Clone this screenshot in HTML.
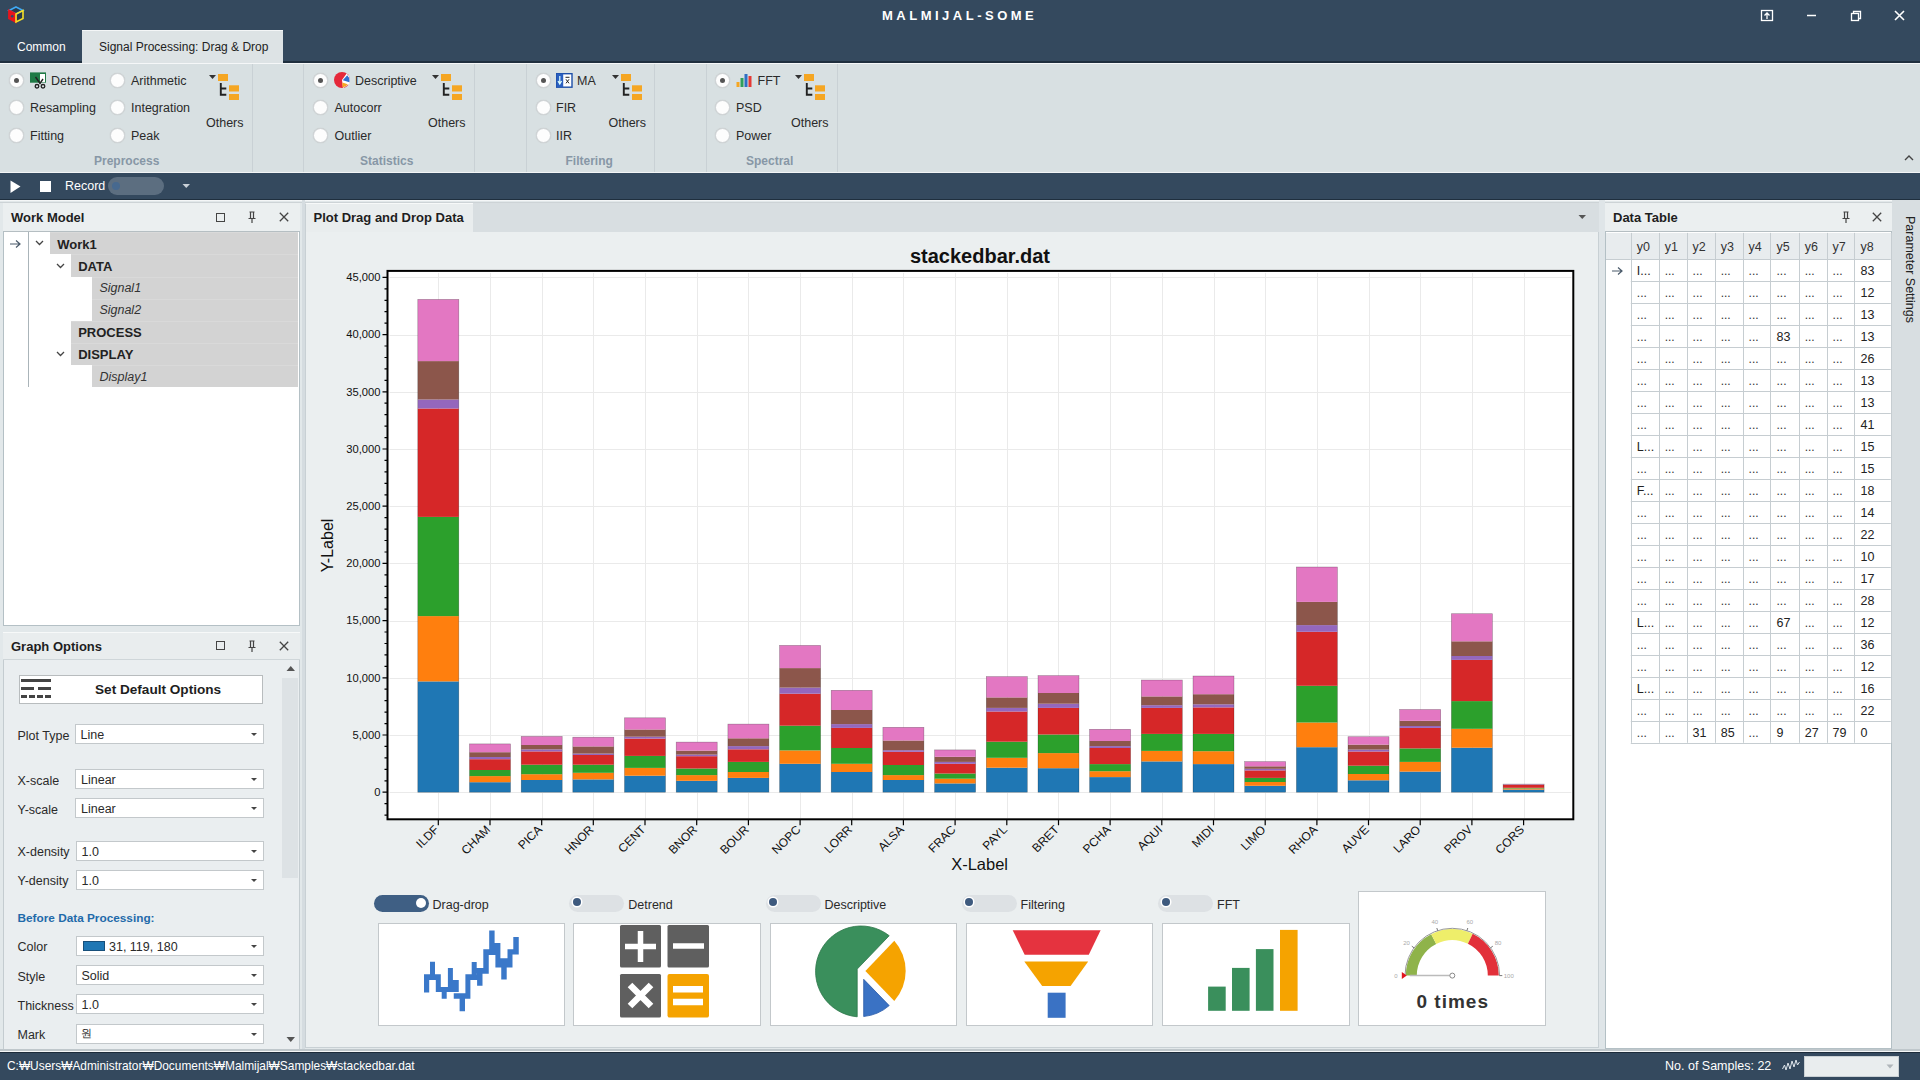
<!DOCTYPE html>
<html><head><meta charset="utf-8">
<style>
*{box-sizing:border-box;margin:0;padding:0}
html,body{width:1920px;height:1080px;overflow:hidden}
body{position:relative;background:#e4e9eb;font-family:"Liberation Sans",sans-serif;font-size:12px;color:#222}
.a{position:absolute}
.t{position:absolute;white-space:nowrap;line-height:1}

.rb{position:absolute;width:15px;height:15px;border-radius:50%;background:#fdfdfd;border:1px solid #cfd4d7;box-shadow:0 0 1px #bbb}
.rb.on::after{content:"";position:absolute;left:4px;top:4px;width:5px;height:5px;border-radius:50%;background:#555}
.rt{position:absolute;white-space:nowrap;line-height:1;font-size:12.5px;color:#2a2a2a}
.gl{position:absolute;white-space:nowrap;line-height:1;font-size:12px;font-weight:bold;color:#8797a6}
.sep{position:absolute;top:64px;width:1px;height:108px;background:#c9d1d5}
.cb{position:absolute;height:20px;background:#fff;border:1px solid #c3c8cb}
.cb::after{content:"";position:absolute;right:6px;top:8px;border-left:3.5px solid transparent;border-right:3.5px solid transparent;border-top:3.5px solid #444}
.lb{position:absolute;white-space:nowrap;line-height:1;font-size:12.5px;color:#2a2a2a}
.ph{position:absolute;white-space:nowrap;line-height:1;font-size:13px;font-weight:bold;color:#1e1e1e}

</style></head><body>
<div class="a" style="left:0;top:0;width:1920px;height:63px;background:#34495e"></div>
<div class="a" style="left:0;top:61px;width:1920px;height:2px;background:#1f2f3e"></div>
<div class="a" style="left:82px;top:30px;width:201px;height:34px;background:#dde3e5;border-top:1px solid #f4f6f7"></div>
<div class="t" style="left:17px;top:41px;font-size:12px;color:#fff">Common</div>
<div class="t" style="left:99px;top:41px;font-size:12px;color:#222">Signal Processing: Drag &amp; Drop</div>
<div class="t" style="left:882px;top:9px;font-size:13px;font-weight:bold;color:#fff;letter-spacing:3.5px">MALMIJAL-SOME</div>
<svg class="a" style="left:7px;top:6px" width="18" height="18" viewBox="0 0 18 18">
<path d="M9 1L16 4.5V12.5L9 16L2 12.5V4.5Z" fill="#2a3a4a"/>
<path d="M9 1L16 4.5L9 8L2 4.5Z" fill="none" stroke="#3fa9f5" stroke-width="1.6"/>
<path d="M2 4.5V12.5L9 16V8Z" fill="#e8141c" stroke="#e8141c" stroke-width="1.8"/><circle cx="5.2" cy="10.2" r="1.3" fill="#2a4a6a"/>
<path d="M16 4.5V12.5L9 16V8Z" fill="none" stroke="#f5e027" stroke-width="1.6"/>
</svg>
<svg class="a" style="left:1755px;top:5px" width="160" height="22" viewBox="0 0 160 22">
<rect x="6.5" y="5.5" width="11" height="10" fill="none" stroke="#fff" stroke-width="1.3"/>
<path d="M12 14V8M9.5 10.5L12 8L14.5 10.5" stroke="#fff" stroke-width="1.3" fill="none"/>
<path d="M52 10.5h9" stroke="#fff" stroke-width="1.5"/>
<rect x="96.5" y="8.5" width="7" height="7" fill="none" stroke="#fff" stroke-width="1.3"/>
<path d="M98.5 8.5V6.5h7v7h-2" fill="none" stroke="#fff" stroke-width="1.3"/>
<path d="M140 6L149 15M149 6L140 15" stroke="#fff" stroke-width="1.6"/>
</svg>
<div class="a" style="left:0;top:63px;width:1920px;height:110px;background:#d8e0e2;border-top:1px solid #f5f7f8"></div>
<div class="sep" style="left:252px"></div>
<div class="sep" style="left:303px"></div>
<div class="sep" style="left:474px"></div>
<div class="sep" style="left:526px"></div>
<div class="sep" style="left:654px"></div>
<div class="sep" style="left:706px"></div>
<div class="sep" style="left:837px"></div>
<div class="rb on" style="left:9.25px;top:72.5px"></div><div class="rb" style="left:9.25px;top:100.0px"></div><div class="rb" style="left:9.25px;top:127.5px"></div>
<div class="rb" style="left:110.0px;top:72.5px"></div><div class="rb" style="left:110.0px;top:100.0px"></div><div class="rb" style="left:110.0px;top:127.5px"></div>
<svg class="a" style="left:30px;top:72px" width="16" height="17" viewBox="0 0 16 17">
<rect x="0" y="0.4" width="16" height="10.3" fill="#1e7a45"/><rect x="10" y="2" width="5" height="8.2" fill="#fff"/>
<path d="M5.5 5L10.5 12M13 7L9.5 12" stroke="#222" stroke-width="1.4"/>
<circle cx="7" cy="14.3" r="1.8" fill="none" stroke="#222" stroke-width="1.3"/><circle cx="13" cy="14.3" r="1.8" fill="none" stroke="#222" stroke-width="1.3"/>
</svg>
<div class="rt" style="left:51px;top:75px">Detrend</div>
<div class="rt" style="left:30px;top:102px">Resampling</div>
<div class="rt" style="left:30px;top:129.5px">Fitting</div>
<div class="rt" style="left:131px;top:75px">Arithmetic</div>
<div class="rt" style="left:131px;top:102px">Integration</div>
<div class="rt" style="left:131px;top:129.5px">Peak</div>
<svg class="a" style="left:208px;top:74px" width="34" height="28" viewBox="0 0 34 28">
<path d="M1 1h7l-3.5 4z" fill="#333"/>
<rect x="10" y="0" width="10" height="7" fill="#f5a623"/>
<path d="M12.8 9v11.8h5.5M12.8 14.5h5.5" stroke="#222" stroke-width="1.9" fill="none"/>
<rect x="21" y="11.3" width="10" height="6.2" fill="#f5a623"/>
<rect x="21" y="20" width="10" height="6" fill="#f5a623"/>
</svg>
<div class="rt" style="left:206px;top:117px">Others</div>
<div class="gl" style="left:94px;top:155px">Preprocess</div>
<div class="rb on" style="left:313.25px;top:72.5px"></div><div class="rb" style="left:313.25px;top:100.0px"></div><div class="rb" style="left:313.25px;top:127.5px"></div>
<svg class="a" style="left:334px;top:72px" width="16" height="16" viewBox="0 0 16 16">
<circle cx="8" cy="8" r="8" fill="#e5283a"/><path d="M8 8L12.6 1.4A8 8 0 0 1 16 8.5L15.5 12L9 16Z" fill="#fff"/>
<path d="M8.8 8.2L13.2 3.2A7.2 7.2 0 0 1 15.3 10.2Z" fill="#2f6fd0"/><path d="M8.3 10.5L13.8 12.2A7.2 7.2 0 0 1 8.6 15.4Z" fill="#f5a623"/></svg>
<div class="rt" style="left:355px;top:75px">Descriptive</div>
<div class="rt" style="left:334.5px;top:102px">Autocorr</div>
<div class="rt" style="left:334.5px;top:129.5px">Outlier</div>
<svg class="a" style="left:431px;top:74px" width="34" height="28" viewBox="0 0 34 28">
<path d="M1 1h7l-3.5 4z" fill="#333"/>
<rect x="10" y="0" width="10" height="7" fill="#f5a623"/>
<path d="M12.8 9v11.8h5.5M12.8 14.5h5.5" stroke="#222" stroke-width="1.9" fill="none"/>
<rect x="21" y="11.3" width="10" height="6.2" fill="#f5a623"/>
<rect x="21" y="20" width="10" height="6" fill="#f5a623"/>
</svg>
<div class="rt" style="left:428px;top:117px">Others</div>
<div class="gl" style="left:360px;top:155px">Statistics</div>
<div class="rb on" style="left:535.5px;top:72.5px"></div><div class="rb" style="left:535.5px;top:100.0px"></div><div class="rb" style="left:535.5px;top:127.5px"></div>
<svg class="a" style="left:556px;top:72.5px" width="17" height="15" viewBox="0 0 17 15">
<rect x="0.7" y="0.7" width="15.3" height="13.5" fill="#fff" stroke="#1d4fa8" stroke-width="1.4"/><rect x="0.7" y="0.7" width="6.5" height="13.5" fill="#2a5fc0"/>
<path d="M3.8 3V10M2 8L3.8 11L5.6 8" stroke="#dff" stroke-width="1.2" fill="none"/>
<path d="M9.5 4.3h4M10 6.3L13 10.3M13 6.3L10 10.3" stroke="#222" stroke-width="1"/></svg>
<div class="rt" style="left:577px;top:75px">MA</div>
<div class="rt" style="left:556px;top:102px">FIR</div>
<div class="rt" style="left:556px;top:129.5px">IIR</div>
<svg class="a" style="left:611px;top:74px" width="34" height="28" viewBox="0 0 34 28">
<path d="M1 1h7l-3.5 4z" fill="#333"/>
<rect x="10" y="0" width="10" height="7" fill="#f5a623"/>
<path d="M12.8 9v11.8h5.5M12.8 14.5h5.5" stroke="#222" stroke-width="1.9" fill="none"/>
<rect x="21" y="11.3" width="10" height="6.2" fill="#f5a623"/>
<rect x="21" y="20" width="10" height="6" fill="#f5a623"/>
</svg>
<div class="rt" style="left:608.5px;top:117px">Others</div>
<div class="gl" style="left:565.5px;top:155px">Filtering</div>
<div class="rb on" style="left:715.0px;top:72.5px"></div><div class="rb" style="left:715.0px;top:100.0px"></div><div class="rb" style="left:715.0px;top:127.5px"></div>
<svg class="a" style="left:735.5px;top:72px" width="16" height="16" viewBox="0 0 16 16">
<rect x="0.5" y="10" width="3" height="5" fill="#f5a623"/><rect x="4.5" y="6" width="3" height="9" fill="#2e9e5b"/>
<rect x="8.5" y="2" width="3" height="13" fill="#2f6fc4"/><rect x="12.5" y="4" width="3" height="11" fill="#e53935"/></svg>
<div class="rt" style="left:757.5px;top:75px">FFT</div>
<div class="rt" style="left:736px;top:102px">PSD</div>
<div class="rt" style="left:736px;top:129.5px">Power</div>
<svg class="a" style="left:793.5px;top:74px" width="34" height="28" viewBox="0 0 34 28">
<path d="M1 1h7l-3.5 4z" fill="#333"/>
<rect x="10" y="0" width="10" height="7" fill="#f5a623"/>
<path d="M12.8 9v11.8h5.5M12.8 14.5h5.5" stroke="#222" stroke-width="1.9" fill="none"/>
<rect x="21" y="11.3" width="10" height="6.2" fill="#f5a623"/>
<rect x="21" y="20" width="10" height="6" fill="#f5a623"/>
</svg>
<div class="rt" style="left:791px;top:117px">Others</div>
<div class="gl" style="left:746px;top:155px">Spectral</div>
<svg class="a" style="left:1903px;top:154px" width="12" height="8"><path d="M2 6L6 2L10 6" stroke="#444" stroke-width="1.4" fill="none"/></svg>
<div class="a" style="left:0;top:172px;width:1920px;height:28px;background:#34495e;border-top:1px solid #f3f5f6"></div>
<div class="a" style="left:0;top:199px;width:1920px;height:1px;background:#1f2f3e"></div>
<svg class="a" style="left:10px;top:180px" width="12" height="14"><path d="M0.5 0.5L10.5 6.5L0.5 13Z" fill="#fff"/></svg>
<div class="a" style="left:40px;top:181px;width:10.5px;height:11px;background:#fff"></div>
<div class="t" style="left:65px;top:180px;font-size:12.5px;color:#fff">Record</div>
<div class="a" style="left:108px;top:177px;width:56px;height:18px;border-radius:9px;background:#5c6e80"></div>
<div class="a" style="left:111.5px;top:182px;width:8px;height:8px;border-radius:50%;background:#47698f"></div>
<svg class="a" style="left:182px;top:183px" width="9" height="6"><path d="M0.5 1H8L4.25 5Z" fill="#c9d1d8"/></svg>
<div class="a" style="left:0;top:200px;width:1920px;height:851px;background:#e2e8ea"></div>
<div class="a" style="left:0;top:200px;width:1920px;height:1px;background:#f4f6f7"></div>
<div class="a" style="left:0;top:201.5px;width:1920px;height:1px;background:#cdd3d6"></div>
<div class="a" style="left:3px;top:203px;width:297px;height:29px;background:#ebeff0;border-bottom:1.5px solid #f6f8f9"></div>
<div class="ph" style="left:11px;top:211px">Work Model</div>
<div class="a" style="left:215.5px;top:212.5px;width:9px;height:9px;border:1.2px solid #444"></div>
<svg class="a" style="left:247px;top:211px" width="10" height="13"><path d="M2.5 1H7.5M3.5 1V7M6.5 1V7M1.5 7.5H8.5M5 7.5V12" stroke="#444" stroke-width="1.2" fill="none"/></svg>
<svg class="a" style="left:279px;top:212px" width="10" height="10"><path d="M0.8 0.8L9.2 9.2M9.2 0.8L0.8 9.2" stroke="#444" stroke-width="1.3"/></svg>
<div class="a" style="left:3px;top:231px;width:297px;height:395px;background:#fff;border:1px solid #b4c0c5;border-top:1.5px solid #b5bec2"></div>
<div class="a" style="left:28px;top:232px;width:1px;height:155px;background:#aab4b9"></div>
<svg class="a" style="left:9px;top:239px" width="13" height="10"><path d="M1 5H11M7 1.5L11 5L7 8.5" stroke="#4a5a6a" stroke-width="1.2" fill="none"/></svg>
<div class="a" style="left:50px;top:232px;width:248px;height:22px;background:#d3d3d3;border-top:1px solid #d9d9d9"></div>
<div class="t" style="left:57.3px;top:237.9px;font-size:13px;font-weight:bold;color:#222">Work1</div>
<svg class="a" style="left:35px;top:240.4px" width="9" height="6"><path d="M1 1L4.5 4.5L8 1" stroke="#444" stroke-width="1.3" fill="none"/></svg>
<div class="a" style="left:71px;top:254px;width:227px;height:23px;background:#d3d3d3;border-top:1px solid #d9d9d9"></div>
<div class="t" style="left:78.2px;top:260.0px;font-size:13px;font-weight:bold;color:#222">DATA</div>
<svg class="a" style="left:56px;top:262.5px" width="9" height="6"><path d="M1 1L4.5 4.5L8 1" stroke="#444" stroke-width="1.3" fill="none"/></svg>
<div class="a" style="left:92px;top:277px;width:206px;height:22px;background:#d3d3d3;border-top:1px solid #d9d9d9"></div>
<div class="t" style="left:99.4px;top:282.1px;font-size:12.5px;font-style:italic;color:#333">Signal1</div>
<div class="a" style="left:92px;top:299px;width:206px;height:22px;background:#d3d3d3;border-top:1px solid #d9d9d9"></div>
<div class="t" style="left:99.4px;top:304.20000000000005px;font-size:12.5px;font-style:italic;color:#333">Signal2</div>
<div class="a" style="left:71px;top:321px;width:227px;height:22px;background:#d3d3d3;border-top:1px solid #d9d9d9"></div>
<div class="t" style="left:78.2px;top:326.30000000000007px;font-size:13px;font-weight:bold;color:#222">PROCESS</div>
<div class="a" style="left:71px;top:343px;width:227px;height:22px;background:#d3d3d3;border-top:1px solid #d9d9d9"></div>
<div class="t" style="left:78.2px;top:348.4000000000001px;font-size:13px;font-weight:bold;color:#222">DISPLAY</div>
<svg class="a" style="left:56px;top:350.9000000000001px" width="9" height="6"><path d="M1 1L4.5 4.5L8 1" stroke="#444" stroke-width="1.3" fill="none"/></svg>
<div class="a" style="left:92px;top:365px;width:206px;height:22px;background:#d3d3d3;border-top:1px solid #d9d9d9"></div>
<div class="t" style="left:99.4px;top:370.5000000000001px;font-size:12.5px;font-style:italic;color:#333">Display1</div>
<div class="a" style="left:3px;top:632px;width:297px;height:28px;background:#e9edee;border-top:1px solid #f7f9f9;border-bottom:1px solid #cfd6d9"></div>
<div class="ph" style="left:11px;top:640px">Graph Options</div>
<div class="a" style="left:215.5px;top:641.0px;width:9px;height:9px;border:1.2px solid #444"></div>
<svg class="a" style="left:247px;top:639.5px" width="10" height="13"><path d="M2.5 1H7.5M3.5 1V7M6.5 1V7M1.5 7.5H8.5M5 7.5V12" stroke="#444" stroke-width="1.2" fill="none"/></svg>
<svg class="a" style="left:279px;top:640.5px" width="10" height="10"><path d="M0.8 0.8L9.2 9.2M9.2 0.8L0.8 9.2" stroke="#444" stroke-width="1.3"/></svg>
<div class="a" style="left:3px;top:660px;width:297px;height:390px;background:#eaeef0;border:1px solid #c4ccd0;border-top:none"></div>
<div class="a" style="left:282px;top:678px;width:16px;height:200px;background:#dde2e5"></div>
<svg class="a" style="left:286px;top:665px" width="10" height="7"><path d="M0.5 6H9L4.75 1Z" fill="#555"/></svg>
<svg class="a" style="left:286px;top:1036px" width="10" height="7"><path d="M0.5 1H9L4.75 6Z" fill="#555"/></svg>
<div class="a" style="left:18.5px;top:675px;width:244px;height:28.5px;background:#fff;border:1px solid #b8bcbe"></div>
<svg class="a" style="left:21px;top:679px" width="31" height="21">
<rect x="0" y="0" width="30" height="3" fill="#444"/>
<rect x="0" y="8" width="13" height="3" fill="#444"/><rect x="17" y="8" width="13" height="3" fill="#444"/>
<rect x="0" y="16" width="6" height="3" fill="#444"/><rect x="8" y="16" width="6" height="3" fill="#444"/><rect x="16" y="16" width="6" height="3" fill="#444"/><rect x="24" y="16" width="6" height="3" fill="#444"/>
</svg>
<div class="ph" style="left:95px;top:682.5px;font-size:13.6px">Set Default Options</div>
<div class="lb" style="left:17.5px;top:729.8px">Plot Type</div>
<div class="cb" style="left:74.5px;top:724.3px;width:189.0px"></div>
<div class="lb" style="left:80.5px;top:729.3px">Line</div>
<div class="lb" style="left:17.5px;top:774.5px">X-scale</div>
<div class="cb" style="left:75px;top:769px;width:188.5px"></div>
<div class="lb" style="left:81px;top:774px">Linear</div>
<div class="lb" style="left:17.5px;top:803.9px">Y-scale</div>
<div class="cb" style="left:75px;top:798.4px;width:188.5px"></div>
<div class="lb" style="left:81px;top:803.4px">Linear</div>
<div class="lb" style="left:17.5px;top:846.2px">X-density</div>
<div class="cb" style="left:75.5px;top:840.7px;width:188.0px"></div>
<div class="lb" style="left:81.5px;top:845.7px">1.0</div>
<div class="lb" style="left:17.5px;top:875.1px">Y-density</div>
<div class="cb" style="left:75.5px;top:869.6px;width:188.0px"></div>
<div class="lb" style="left:81.5px;top:874.6px">1.0</div>
<div class="lb" style="left:17.5px;top:941.0px">Color</div>
<div class="cb" style="left:75.5px;top:935.5px;width:188.0px"></div>
<div class="a" style="left:83px;top:941.0px;width:21.5px;height:9.5px;background:#1f77b4;border:1px solid #174f7a"></div>
<div class="lb" style="left:109px;top:940.5px">31, 119, 180</div>
<div class="lb" style="left:17.5px;top:970.5px">Style</div>
<div class="cb" style="left:75.5px;top:965px;width:188.0px"></div>
<div class="lb" style="left:81.5px;top:970px">Solid</div>
<div class="lb" style="left:17.5px;top:999.9px">Thickness</div>
<div class="cb" style="left:75.5px;top:994.4px;width:188.0px"></div>
<div class="lb" style="left:81.5px;top:999.4px">1.0</div>
<div class="lb" style="left:17.5px;top:1029.3px">Mark</div>
<div class="cb" style="left:75.5px;top:1023.8px;width:188.0px"></div>
<div class="lb" style="left:81px;top:1027.8px;font-size:11px">&#50896;</div>
<div class="a" style="left:17.5px;top:912.5px;white-space:nowrap;line-height:1;font-size:11.8px;font-weight:bold;color:#1f6aaa">Before Data Processing:</div>
<div class="a" style="left:302px;top:200px;width:3px;height:851px;background:#d5dce0"></div>
<div class="a" style="left:305px;top:203px;width:1294px;height:845px;background:#ebeff0;border:1px solid #c8d0d4"></div>
<div class="a" style="left:305px;top:203px;width:1294px;height:29px;background:#d8dee1"></div>
<div class="a" style="left:305px;top:203px;width:168px;height:29px;background:#e9edee;border-top:1px solid #f7f9f9;border-left:1px solid #c8d0d4"></div>
<div class="ph" style="left:313.5px;top:211px">Plot Drag and Drop Data</div>
<svg class="a" style="left:1578px;top:214px" width="9" height="6"><path d="M0.5 1H8L4.25 5Z" fill="#555"/></svg>
<svg width="1920" height="1080" style="position:absolute;left:0;top:0">
<rect x="387.5" y="270.9" width="1185.8" height="548.4" fill="#fff"/>
<path d="M438.5 272.9V818.3 M490.5 272.9V818.3 M542.5 272.9V818.3 M593.5 272.9V818.3 M645.5 272.9V818.3 M697.5 272.9V818.3 M748.5 272.9V818.3 M800.5 272.9V818.3 M852.5 272.9V818.3 M903.5 272.9V818.3 M955.5 272.9V818.3 M1007.5 272.9V818.3 M1058.5 272.9V818.3 M1110.5 272.9V818.3 M1162.5 272.9V818.3 M1214.5 272.9V818.3 M1265.5 272.9V818.3 M1317.5 272.9V818.3 M1369.5 272.9V818.3 M1420.5 272.9V818.3 M1472.5 272.9V818.3 M1524.5 272.9V818.3 M389.5 792.5H1571.3 M389.5 735.5H1571.3 M389.5 678.5H1571.3 M389.5 621.5H1571.3 M389.5 563.5H1571.3 M389.5 506.5H1571.3 M389.5 449.5H1571.3 M389.5 392.5H1571.3 M389.5 335.5H1571.3 M389.5 277.5H1571.3" stroke="#eaeaea" stroke-width="1" fill="none"/>
<rect x="417.8" y="681.4" width="41" height="110.8" fill="#1f77b4"/>
<rect x="417.8" y="616.1" width="41" height="65.3" fill="#ff7f0e"/>
<rect x="417.8" y="516.9" width="41" height="99.2" fill="#2ca02c"/>
<rect x="417.8" y="408.5" width="41" height="108.4" fill="#d62728"/>
<rect x="417.8" y="399.5" width="41" height="9.0" fill="#9467bd"/>
<rect x="417.8" y="361.1" width="41" height="38.4" fill="#8c564b"/>
<rect x="417.8" y="299.4" width="41" height="61.7" fill="#e377c2"/>
<rect x="417.8" y="299.4" width="41" height="492.8" fill="none" stroke="#000" stroke-opacity="0.35" stroke-width="0.6"/>
<rect x="469.5" y="782.2" width="41" height="10.0" fill="#1f77b4"/>
<rect x="469.5" y="776.1" width="41" height="6.1" fill="#ff7f0e"/>
<rect x="469.5" y="770.0" width="41" height="6.1" fill="#2ca02c"/>
<rect x="469.5" y="759.2" width="41" height="10.8" fill="#d62728"/>
<rect x="469.5" y="757.0" width="41" height="2.2" fill="#9467bd"/>
<rect x="469.5" y="752.2" width="41" height="4.8" fill="#8c564b"/>
<rect x="469.5" y="743.9" width="41" height="8.3" fill="#e377c2"/>
<rect x="469.5" y="743.9" width="41" height="48.3" fill="none" stroke="#000" stroke-opacity="0.35" stroke-width="0.6"/>
<rect x="521.2" y="780.0" width="41" height="12.2" fill="#1f77b4"/>
<rect x="521.2" y="774.2" width="41" height="5.8" fill="#ff7f0e"/>
<rect x="521.2" y="764.7" width="41" height="9.5" fill="#2ca02c"/>
<rect x="521.2" y="751.4" width="41" height="13.3" fill="#d62728"/>
<rect x="521.2" y="749.4" width="41" height="2.0" fill="#9467bd"/>
<rect x="521.2" y="745.0" width="41" height="4.4" fill="#8c564b"/>
<rect x="521.2" y="736.4" width="41" height="8.6" fill="#e377c2"/>
<rect x="521.2" y="736.4" width="41" height="55.8" fill="none" stroke="#000" stroke-opacity="0.35" stroke-width="0.6"/>
<rect x="572.8" y="779.4" width="41" height="12.8" fill="#1f77b4"/>
<rect x="572.8" y="772.8" width="41" height="6.6" fill="#ff7f0e"/>
<rect x="572.8" y="764.7" width="41" height="8.1" fill="#2ca02c"/>
<rect x="572.8" y="755.0" width="41" height="9.7" fill="#d62728"/>
<rect x="572.8" y="753.6" width="41" height="1.4" fill="#9467bd"/>
<rect x="572.8" y="746.4" width="41" height="7.2" fill="#8c564b"/>
<rect x="572.8" y="737.2" width="41" height="9.2" fill="#e377c2"/>
<rect x="572.8" y="737.2" width="41" height="55.0" fill="none" stroke="#000" stroke-opacity="0.35" stroke-width="0.6"/>
<rect x="624.5" y="775.7" width="41" height="16.5" fill="#1f77b4"/>
<rect x="624.5" y="767.9" width="41" height="7.8" fill="#ff7f0e"/>
<rect x="624.5" y="755.9" width="41" height="12.0" fill="#2ca02c"/>
<rect x="624.5" y="738.6" width="41" height="17.3" fill="#d62728"/>
<rect x="624.5" y="736.7" width="41" height="1.9" fill="#9467bd"/>
<rect x="624.5" y="729.5" width="41" height="7.2" fill="#8c564b"/>
<rect x="624.5" y="717.8" width="41" height="11.7" fill="#e377c2"/>
<rect x="624.5" y="717.8" width="41" height="74.4" fill="none" stroke="#000" stroke-opacity="0.35" stroke-width="0.6"/>
<rect x="676.2" y="780.8" width="41" height="11.4" fill="#1f77b4"/>
<rect x="676.2" y="775.1" width="41" height="5.7" fill="#ff7f0e"/>
<rect x="676.2" y="768.5" width="41" height="6.6" fill="#2ca02c"/>
<rect x="676.2" y="756.2" width="41" height="12.3" fill="#d62728"/>
<rect x="676.2" y="754.6" width="41" height="1.6" fill="#9467bd"/>
<rect x="676.2" y="750.6" width="41" height="4.0" fill="#8c564b"/>
<rect x="676.2" y="742.1" width="41" height="8.5" fill="#e377c2"/>
<rect x="676.2" y="742.1" width="41" height="50.1" fill="none" stroke="#000" stroke-opacity="0.35" stroke-width="0.6"/>
<rect x="727.9" y="777.9" width="41" height="14.3" fill="#1f77b4"/>
<rect x="727.9" y="772.0" width="41" height="5.9" fill="#ff7f0e"/>
<rect x="727.9" y="761.9" width="41" height="10.1" fill="#2ca02c"/>
<rect x="727.9" y="749.3" width="41" height="12.6" fill="#d62728"/>
<rect x="727.9" y="746.1" width="41" height="3.2" fill="#9467bd"/>
<rect x="727.9" y="738.3" width="41" height="7.8" fill="#8c564b"/>
<rect x="727.9" y="724.1" width="41" height="14.2" fill="#e377c2"/>
<rect x="727.9" y="724.1" width="41" height="68.1" fill="none" stroke="#000" stroke-opacity="0.35" stroke-width="0.6"/>
<rect x="779.6" y="763.8" width="41" height="28.4" fill="#1f77b4"/>
<rect x="779.6" y="750.4" width="41" height="13.4" fill="#ff7f0e"/>
<rect x="779.6" y="725.7" width="41" height="24.7" fill="#2ca02c"/>
<rect x="779.6" y="693.7" width="41" height="32.0" fill="#d62728"/>
<rect x="779.6" y="687.6" width="41" height="6.1" fill="#9467bd"/>
<rect x="779.6" y="668.1" width="41" height="19.5" fill="#8c564b"/>
<rect x="779.6" y="645.4" width="41" height="22.7" fill="#e377c2"/>
<rect x="779.6" y="645.4" width="41" height="146.8" fill="none" stroke="#000" stroke-opacity="0.35" stroke-width="0.6"/>
<rect x="831.2" y="772.0" width="41" height="20.2" fill="#1f77b4"/>
<rect x="831.2" y="763.8" width="41" height="8.2" fill="#ff7f0e"/>
<rect x="831.2" y="748.0" width="41" height="15.8" fill="#2ca02c"/>
<rect x="831.2" y="727.9" width="41" height="20.1" fill="#d62728"/>
<rect x="831.2" y="724.1" width="41" height="3.8" fill="#9467bd"/>
<rect x="831.2" y="710.0" width="41" height="14.1" fill="#8c564b"/>
<rect x="831.2" y="690.3" width="41" height="19.7" fill="#e377c2"/>
<rect x="831.2" y="690.3" width="41" height="101.9" fill="none" stroke="#000" stroke-opacity="0.35" stroke-width="0.6"/>
<rect x="882.9" y="780.0" width="41" height="12.2" fill="#1f77b4"/>
<rect x="882.9" y="775.1" width="41" height="4.9" fill="#ff7f0e"/>
<rect x="882.9" y="765.0" width="41" height="10.1" fill="#2ca02c"/>
<rect x="882.9" y="751.8" width="41" height="13.2" fill="#d62728"/>
<rect x="882.9" y="750.2" width="41" height="1.6" fill="#9467bd"/>
<rect x="882.9" y="740.5" width="41" height="9.7" fill="#8c564b"/>
<rect x="882.9" y="727.3" width="41" height="13.2" fill="#e377c2"/>
<rect x="882.9" y="727.3" width="41" height="64.9" fill="none" stroke="#000" stroke-opacity="0.35" stroke-width="0.6"/>
<rect x="934.6" y="783.4" width="41" height="8.8" fill="#1f77b4"/>
<rect x="934.6" y="778.7" width="41" height="4.7" fill="#ff7f0e"/>
<rect x="934.6" y="773.5" width="41" height="5.2" fill="#2ca02c"/>
<rect x="934.6" y="763.8" width="41" height="9.7" fill="#d62728"/>
<rect x="934.6" y="761.9" width="41" height="1.9" fill="#9467bd"/>
<rect x="934.6" y="756.8" width="41" height="5.1" fill="#8c564b"/>
<rect x="934.6" y="749.9" width="41" height="6.9" fill="#e377c2"/>
<rect x="934.6" y="749.9" width="41" height="42.3" fill="none" stroke="#000" stroke-opacity="0.35" stroke-width="0.6"/>
<rect x="986.3" y="767.7" width="41" height="24.5" fill="#1f77b4"/>
<rect x="986.3" y="757.8" width="41" height="9.9" fill="#ff7f0e"/>
<rect x="986.3" y="741.7" width="41" height="16.1" fill="#2ca02c"/>
<rect x="986.3" y="711.5" width="41" height="30.2" fill="#d62728"/>
<rect x="986.3" y="707.9" width="41" height="3.6" fill="#9467bd"/>
<rect x="986.3" y="697.4" width="41" height="10.5" fill="#8c564b"/>
<rect x="986.3" y="676.6" width="41" height="20.8" fill="#e377c2"/>
<rect x="986.3" y="676.6" width="41" height="115.6" fill="none" stroke="#000" stroke-opacity="0.35" stroke-width="0.6"/>
<rect x="1038.0" y="768.2" width="41" height="24.0" fill="#1f77b4"/>
<rect x="1038.0" y="753.1" width="41" height="15.1" fill="#ff7f0e"/>
<rect x="1038.0" y="734.5" width="41" height="18.6" fill="#2ca02c"/>
<rect x="1038.0" y="707.9" width="41" height="26.6" fill="#d62728"/>
<rect x="1038.0" y="703.7" width="41" height="4.2" fill="#9467bd"/>
<rect x="1038.0" y="693.0" width="41" height="10.7" fill="#8c564b"/>
<rect x="1038.0" y="675.6" width="41" height="17.4" fill="#e377c2"/>
<rect x="1038.0" y="675.6" width="41" height="116.6" fill="none" stroke="#000" stroke-opacity="0.35" stroke-width="0.6"/>
<rect x="1089.6" y="777.1" width="41" height="15.1" fill="#1f77b4"/>
<rect x="1089.6" y="771.2" width="41" height="5.9" fill="#ff7f0e"/>
<rect x="1089.6" y="764.1" width="41" height="7.1" fill="#2ca02c"/>
<rect x="1089.6" y="748.0" width="41" height="16.1" fill="#d62728"/>
<rect x="1089.6" y="746.1" width="41" height="1.9" fill="#9467bd"/>
<rect x="1089.6" y="741.0" width="41" height="5.1" fill="#8c564b"/>
<rect x="1089.6" y="729.3" width="41" height="11.7" fill="#e377c2"/>
<rect x="1089.6" y="729.3" width="41" height="62.9" fill="none" stroke="#000" stroke-opacity="0.35" stroke-width="0.6"/>
<rect x="1141.3" y="761.4" width="41" height="30.8" fill="#1f77b4"/>
<rect x="1141.3" y="750.9" width="41" height="10.5" fill="#ff7f0e"/>
<rect x="1141.3" y="733.9" width="41" height="17.0" fill="#2ca02c"/>
<rect x="1141.3" y="707.9" width="41" height="26.0" fill="#d62728"/>
<rect x="1141.3" y="705.2" width="41" height="2.7" fill="#9467bd"/>
<rect x="1141.3" y="696.4" width="41" height="8.8" fill="#8c564b"/>
<rect x="1141.3" y="680.0" width="41" height="16.4" fill="#e377c2"/>
<rect x="1141.3" y="680.0" width="41" height="112.2" fill="none" stroke="#000" stroke-opacity="0.35" stroke-width="0.6"/>
<rect x="1193.0" y="764.1" width="41" height="28.1" fill="#1f77b4"/>
<rect x="1193.0" y="751.2" width="41" height="12.9" fill="#ff7f0e"/>
<rect x="1193.0" y="733.9" width="41" height="17.3" fill="#2ca02c"/>
<rect x="1193.0" y="707.4" width="41" height="26.5" fill="#d62728"/>
<rect x="1193.0" y="704.3" width="41" height="3.1" fill="#9467bd"/>
<rect x="1193.0" y="694.2" width="41" height="10.1" fill="#8c564b"/>
<rect x="1193.0" y="676.0" width="41" height="18.2" fill="#e377c2"/>
<rect x="1193.0" y="676.0" width="41" height="116.2" fill="none" stroke="#000" stroke-opacity="0.35" stroke-width="0.6"/>
<rect x="1244.7" y="785.8" width="41" height="6.4" fill="#1f77b4"/>
<rect x="1244.7" y="782.0" width="41" height="3.8" fill="#ff7f0e"/>
<rect x="1244.7" y="777.9" width="41" height="4.1" fill="#2ca02c"/>
<rect x="1244.7" y="770.4" width="41" height="7.5" fill="#d62728"/>
<rect x="1244.7" y="768.8" width="41" height="1.6" fill="#9467bd"/>
<rect x="1244.7" y="766.3" width="41" height="2.5" fill="#8c564b"/>
<rect x="1244.7" y="761.6" width="41" height="4.7" fill="#e377c2"/>
<rect x="1244.7" y="761.6" width="41" height="30.6" fill="none" stroke="#000" stroke-opacity="0.35" stroke-width="0.6"/>
<rect x="1296.4" y="747.2" width="41" height="45.0" fill="#1f77b4"/>
<rect x="1296.4" y="722.5" width="41" height="24.7" fill="#ff7f0e"/>
<rect x="1296.4" y="685.8" width="41" height="36.7" fill="#2ca02c"/>
<rect x="1296.4" y="631.8" width="41" height="54.0" fill="#d62728"/>
<rect x="1296.4" y="625.1" width="41" height="6.7" fill="#9467bd"/>
<rect x="1296.4" y="601.9" width="41" height="23.2" fill="#8c564b"/>
<rect x="1296.4" y="567.0" width="41" height="34.9" fill="#e377c2"/>
<rect x="1296.4" y="567.0" width="41" height="225.2" fill="none" stroke="#000" stroke-opacity="0.35" stroke-width="0.6"/>
<rect x="1348.0" y="780.3" width="41" height="11.9" fill="#1f77b4"/>
<rect x="1348.0" y="774.0" width="41" height="6.3" fill="#ff7f0e"/>
<rect x="1348.0" y="765.7" width="41" height="8.3" fill="#2ca02c"/>
<rect x="1348.0" y="751.5" width="41" height="14.2" fill="#d62728"/>
<rect x="1348.0" y="749.6" width="41" height="1.9" fill="#9467bd"/>
<rect x="1348.0" y="744.6" width="41" height="5.0" fill="#8c564b"/>
<rect x="1348.0" y="736.7" width="41" height="7.9" fill="#e377c2"/>
<rect x="1348.0" y="736.7" width="41" height="55.5" fill="none" stroke="#000" stroke-opacity="0.35" stroke-width="0.6"/>
<rect x="1399.7" y="771.6" width="41" height="20.6" fill="#1f77b4"/>
<rect x="1399.7" y="761.9" width="41" height="9.7" fill="#ff7f0e"/>
<rect x="1399.7" y="748.4" width="41" height="13.5" fill="#2ca02c"/>
<rect x="1399.7" y="727.9" width="41" height="20.5" fill="#d62728"/>
<rect x="1399.7" y="726.0" width="41" height="1.9" fill="#9467bd"/>
<rect x="1399.7" y="720.8" width="41" height="5.2" fill="#8c564b"/>
<rect x="1399.7" y="709.5" width="41" height="11.3" fill="#e377c2"/>
<rect x="1399.7" y="709.5" width="41" height="82.7" fill="none" stroke="#000" stroke-opacity="0.35" stroke-width="0.6"/>
<rect x="1451.4" y="747.7" width="41" height="44.5" fill="#1f77b4"/>
<rect x="1451.4" y="728.8" width="41" height="18.9" fill="#ff7f0e"/>
<rect x="1451.4" y="701.1" width="41" height="27.7" fill="#2ca02c"/>
<rect x="1451.4" y="659.9" width="41" height="41.2" fill="#d62728"/>
<rect x="1451.4" y="656.0" width="41" height="3.9" fill="#9467bd"/>
<rect x="1451.4" y="641.3" width="41" height="14.7" fill="#8c564b"/>
<rect x="1451.4" y="613.7" width="41" height="27.6" fill="#e377c2"/>
<rect x="1451.4" y="613.7" width="41" height="178.5" fill="none" stroke="#000" stroke-opacity="0.35" stroke-width="0.6"/>
<rect x="1503.1" y="789.6" width="41" height="2.6" fill="#1f77b4"/>
<rect x="1503.1" y="788.5" width="41" height="1.1" fill="#ff7f0e"/>
<rect x="1503.1" y="787.8" width="41" height="0.7" fill="#2ca02c"/>
<rect x="1503.1" y="785.0" width="41" height="2.8" fill="#d62728"/>
<rect x="1503.1" y="784.8" width="41" height="0.2" fill="#9467bd"/>
<rect x="1503.1" y="784.5" width="41" height="0.3" fill="#8c564b"/>
<rect x="1503.1" y="784.1" width="41" height="0.4" fill="#e377c2"/>
<rect x="1503.1" y="784.1" width="41" height="8.1" fill="none" stroke="#000" stroke-opacity="0.35" stroke-width="0.6"/>
<rect x="387.5" y="270.9" width="1185.8" height="548.4" fill="none" stroke="#000" stroke-width="2"/>
<path d="M384.5 815.1H387.5 M384.5 803.6H387.5 M382.5 792.2H387.5 M384.5 780.8H387.5 M384.5 769.3H387.5 M384.5 757.9H387.5 M384.5 746.4H387.5 M382.5 735.0H387.5 M384.5 723.6H387.5 M384.5 712.1H387.5 M384.5 700.7H387.5 M384.5 689.2H387.5 M382.5 677.8H387.5 M384.5 666.4H387.5 M384.5 654.9H387.5 M384.5 643.5H387.5 M384.5 632.0H387.5 M382.5 620.6H387.5 M384.5 609.2H387.5 M384.5 597.7H387.5 M384.5 586.3H387.5 M384.5 574.8H387.5 M382.5 563.4H387.5 M384.5 552.0H387.5 M384.5 540.5H387.5 M384.5 529.1H387.5 M384.5 517.6H387.5 M382.5 506.2H387.5 M384.5 494.8H387.5 M384.5 483.3H387.5 M384.5 471.9H387.5 M384.5 460.4H387.5 M382.5 449.0H387.5 M384.5 437.6H387.5 M384.5 426.1H387.5 M384.5 414.7H387.5 M384.5 403.2H387.5 M382.5 391.8H387.5 M384.5 380.4H387.5 M384.5 368.9H387.5 M384.5 357.5H387.5 M384.5 346.0H387.5 M382.5 334.6H387.5 M384.5 323.2H387.5 M384.5 311.7H387.5 M384.5 300.3H387.5 M384.5 288.8H387.5 M382.5 277.4H387.5 M438.3 819.3V825.3 M490.0 819.3V825.3 M541.7 819.3V825.3 M593.3 819.3V825.3 M645.0 819.3V825.3 M696.7 819.3V825.3 M748.4 819.3V825.3 M800.1 819.3V825.3 M851.7 819.3V825.3 M903.4 819.3V825.3 M955.1 819.3V825.3 M1006.8 819.3V825.3 M1058.5 819.3V825.3 M1110.1 819.3V825.3 M1161.8 819.3V825.3 M1213.5 819.3V825.3 M1265.2 819.3V825.3 M1316.9 819.3V825.3 M1368.5 819.3V825.3 M1420.2 819.3V825.3 M1471.9 819.3V825.3 M1523.6 819.3V825.3" stroke="#000" stroke-width="1.2" fill="none"/>
<text x="380.5" y="796.0" text-anchor="end" font-family="Liberation Sans" font-size="11.2" fill="#111">0</text>
<text x="380.5" y="738.8" text-anchor="end" font-family="Liberation Sans" font-size="11.2" fill="#111">5,000</text>
<text x="380.5" y="681.6" text-anchor="end" font-family="Liberation Sans" font-size="11.2" fill="#111">10,000</text>
<text x="380.5" y="624.4" text-anchor="end" font-family="Liberation Sans" font-size="11.2" fill="#111">15,000</text>
<text x="380.5" y="567.2" text-anchor="end" font-family="Liberation Sans" font-size="11.2" fill="#111">20,000</text>
<text x="380.5" y="510.0" text-anchor="end" font-family="Liberation Sans" font-size="11.2" fill="#111">25,000</text>
<text x="380.5" y="452.8" text-anchor="end" font-family="Liberation Sans" font-size="11.2" fill="#111">30,000</text>
<text x="380.5" y="395.6" text-anchor="end" font-family="Liberation Sans" font-size="11.2" fill="#111">35,000</text>
<text x="380.5" y="338.4" text-anchor="end" font-family="Liberation Sans" font-size="11.2" fill="#111">40,000</text>
<text x="380.5" y="281.2" text-anchor="end" font-family="Liberation Sans" font-size="11.2" fill="#111">45,000</text>
<text transform="translate(439.5,830.3) rotate(-45)" text-anchor="end" font-family="Liberation Sans" font-size="12" fill="#111">ILDF</text>
<text transform="translate(491.2,830.3) rotate(-45)" text-anchor="end" font-family="Liberation Sans" font-size="12" fill="#111">CHAM</text>
<text transform="translate(542.9,830.3) rotate(-45)" text-anchor="end" font-family="Liberation Sans" font-size="12" fill="#111">PICA</text>
<text transform="translate(594.5,830.3) rotate(-45)" text-anchor="end" font-family="Liberation Sans" font-size="12" fill="#111">HNOR</text>
<text transform="translate(646.2,830.3) rotate(-45)" text-anchor="end" font-family="Liberation Sans" font-size="12" fill="#111">CENT</text>
<text transform="translate(697.9,830.3) rotate(-45)" text-anchor="end" font-family="Liberation Sans" font-size="12" fill="#111">BNOR</text>
<text transform="translate(749.6,830.3) rotate(-45)" text-anchor="end" font-family="Liberation Sans" font-size="12" fill="#111">BOUR</text>
<text transform="translate(801.3,830.3) rotate(-45)" text-anchor="end" font-family="Liberation Sans" font-size="12" fill="#111">NOPC</text>
<text transform="translate(852.9,830.3) rotate(-45)" text-anchor="end" font-family="Liberation Sans" font-size="12" fill="#111">LORR</text>
<text transform="translate(904.6,830.3) rotate(-45)" text-anchor="end" font-family="Liberation Sans" font-size="12" fill="#111">ALSA</text>
<text transform="translate(956.3,830.3) rotate(-45)" text-anchor="end" font-family="Liberation Sans" font-size="12" fill="#111">FRAC</text>
<text transform="translate(1008.0,830.3) rotate(-45)" text-anchor="end" font-family="Liberation Sans" font-size="12" fill="#111">PAYL</text>
<text transform="translate(1059.7,830.3) rotate(-45)" text-anchor="end" font-family="Liberation Sans" font-size="12" fill="#111">BRET</text>
<text transform="translate(1111.3,830.3) rotate(-45)" text-anchor="end" font-family="Liberation Sans" font-size="12" fill="#111">PCHA</text>
<text transform="translate(1163.0,830.3) rotate(-45)" text-anchor="end" font-family="Liberation Sans" font-size="12" fill="#111">AQUI</text>
<text transform="translate(1214.7,830.3) rotate(-45)" text-anchor="end" font-family="Liberation Sans" font-size="12" fill="#111">MIDI</text>
<text transform="translate(1266.4,830.3) rotate(-45)" text-anchor="end" font-family="Liberation Sans" font-size="12" fill="#111">LIMO</text>
<text transform="translate(1318.1,830.3) rotate(-45)" text-anchor="end" font-family="Liberation Sans" font-size="12" fill="#111">RHOA</text>
<text transform="translate(1369.7,830.3) rotate(-45)" text-anchor="end" font-family="Liberation Sans" font-size="12" fill="#111">AUVE</text>
<text transform="translate(1421.4,830.3) rotate(-45)" text-anchor="end" font-family="Liberation Sans" font-size="12" fill="#111">LARO</text>
<text transform="translate(1473.1,830.3) rotate(-45)" text-anchor="end" font-family="Liberation Sans" font-size="12" fill="#111">PROV</text>
<text transform="translate(1524.8,830.3) rotate(-45)" text-anchor="end" font-family="Liberation Sans" font-size="12" fill="#111">CORS</text>
<text x="979.6" y="870.3" text-anchor="middle" font-family="Liberation Sans" font-size="16.5" fill="#111">X-Label</text>
<text transform="translate(333.3,545.5) rotate(-90)" text-anchor="middle" font-family="Liberation Sans" font-size="16" fill="#111">Y-Label</text>
<text x="980" y="263.3" text-anchor="middle" font-family="Liberation Sans" font-weight="bold" font-size="20" fill="#111">stackedbar.dat</text>
</svg>
<div class="a" style="left:373.5px;top:895px;width:55px;height:17px;border-radius:8.5px;background:#3f5f84"></div>
<div class="a" style="left:415.5px;top:898px;width:10px;height:10px;border-radius:50%;background:#fff"></div>
<div class="t" style="left:432.5px;top:898.5px;font-size:12.5px;color:#2a2a2a">Drag-drop</div>
<div class="a" style="left:377.5px;top:923px;width:187.5px;height:102.5px;background:#fff;border:1px solid #c3c8cb"></div>
<div class="a" style="left:569.3px;top:895px;width:55px;height:17px;border-radius:8.5px;background:#dde1e4"></div>
<div class="a" style="left:572.8px;top:898px;width:8px;height:8px;border-radius:50%;background:#3e5a7e;box-shadow:0 0 0 1.5px #fff"></div>
<div class="t" style="left:628.3px;top:898.5px;font-size:12.5px;color:#2a2a2a">Detrend</div>
<div class="a" style="left:573.3px;top:923px;width:187.5px;height:102.5px;background:#fff;border:1px solid #c3c8cb"></div>
<div class="a" style="left:765.5px;top:895px;width:55px;height:17px;border-radius:8.5px;background:#dde1e4"></div>
<div class="a" style="left:769.0px;top:898px;width:8px;height:8px;border-radius:50%;background:#3e5a7e;box-shadow:0 0 0 1.5px #fff"></div>
<div class="t" style="left:824.5px;top:898.5px;font-size:12.5px;color:#2a2a2a">Descriptive</div>
<div class="a" style="left:769.5px;top:923px;width:187.5px;height:102.5px;background:#fff;border:1px solid #c3c8cb"></div>
<div class="a" style="left:961.5px;top:895px;width:55px;height:17px;border-radius:8.5px;background:#dde1e4"></div>
<div class="a" style="left:965.0px;top:898px;width:8px;height:8px;border-radius:50%;background:#3e5a7e;box-shadow:0 0 0 1.5px #fff"></div>
<div class="t" style="left:1020.5px;top:898.5px;font-size:12.5px;color:#2a2a2a">Filtering</div>
<div class="a" style="left:965.5px;top:923px;width:187.5px;height:102.5px;background:#fff;border:1px solid #c3c8cb"></div>
<div class="a" style="left:1158px;top:895px;width:55px;height:17px;border-radius:8.5px;background:#dde1e4"></div>
<div class="a" style="left:1161.5px;top:898px;width:8px;height:8px;border-radius:50%;background:#3e5a7e;box-shadow:0 0 0 1.5px #fff"></div>
<div class="t" style="left:1217px;top:898.5px;font-size:12.5px;color:#2a2a2a">FFT</div>
<div class="a" style="left:1162px;top:923px;width:187.5px;height:102.5px;background:#fff;border:1px solid #c3c8cb"></div>
<svg class="a" style="left:0;top:0" width="1920" height="1080"><path d="M424 974.2H429.2V992.5H424Z M424 974.2H440.8V980H424Z M430 961.7H435V980H430Z M435.8 974.2H440.8V992H435.8Z M435.8 987H458.75V992H435.8Z M441.7 987H446.7V998.75H441.7Z M447.9 967.9H452.9V992H447.9Z M447.9 980H458.75V992H447.9Z M453.75 993.3H470.4V998.75H453.75Z M459.6 993.3H465V1011.25H459.6Z M465.4 974.2H470.4V998.75H465.4Z M465.4 974.2H482.5V980H465.4Z M471.7 962H476.7V980H471.7Z M471.7 967.9H488.75V973.75H471.7Z M477.1 967.9H482.5V985.8H477.1Z M483.3 949.2H488.75V973.75H483.3Z M483.3 949.2H500.4V955H483.3Z M489.2 930.4H494.6V955H489.2Z M489.2 942.9H500.4V955H489.2Z M495.4 942.9H500.4V967.5H495.4Z M495.4 958.3H512.5V967.5H495.4Z M501.25 958.3H506.7V979.6H501.25Z M507.5 949.2H512.5V967.5H507.5Z M507.5 949.2H518.75V954.6H507.5Z M513.3 937.1H518.75V954.6H513.3Z" fill="#3a78c9" fill-rule="nonzero"/></svg>
<svg class="a" style="left:0;top:0" width="1920" height="1080">
<rect x="620" y="925" width="41" height="42.5" rx="1.5" fill="#5f5f5f"/>
<rect x="667.5" y="925" width="41.5" height="42.5" rx="1.5" fill="#5f5f5f"/>
<rect x="620" y="974" width="41" height="43.5" rx="1.5" fill="#5f5f5f"/>
<rect x="667.5" y="974" width="41.5" height="43.5" rx="2" fill="#f5a300"/>
<path d="M625 946.5H656M640.5 931V962" stroke="#fff" stroke-width="5.5"/>
<path d="M673 946H704" stroke="#fff" stroke-width="5.5"/>
<path d="M630 985L651 1006M651 985L630 1006" stroke="#fff" stroke-width="6.5"/>
<path d="M673 989.3H703M673 1002H703" stroke="#fff" stroke-width="6.5"/>
</svg>
<svg class="a" style="left:0;top:0" width="1920" height="1080">
<path d="M857.2 1016.8A45.5 45.5 0 1 1 889.2 935.7L857.2 969.1Z" fill="#3a8f5c" stroke="#2b7548" stroke-width="0.8"/>
<path d="M865.4 970.9L894.3 940.8A45.5 45.5 0 0 1 894.3 1001Z" fill="#f5a300"/>
<path d="M863.7 979.3V1016.5A45.5 45.5 0 0 0 889.2 1005.6Z" fill="#3a72c4" stroke="#2a5aa8" stroke-width="0.8"/>
</svg>
<svg class="a" style="left:0;top:0" width="1920" height="1080">
<path d="M1012.7 930.3H1100.6L1088.8 954.8H1024.7Z" fill="#e5333f"/>
<path d="M1024.3 961.4H1088.2L1070.6 986.1H1042.2Z" fill="#f5a300"/>
<rect x="1047.7" y="992.7" width="17.9" height="25.1" fill="#3a72c4"/>
</svg>
<svg class="a" style="left:0;top:0" width="1920" height="1080">
<rect x="1208.1" y="986.6" width="17.6" height="24.2" fill="#3a8f5c"/>
<rect x="1232" y="967.9" width="17.6" height="42.9" fill="#3a8f5c"/>
<rect x="1255.9" y="949.1" width="17.6" height="61.7" fill="#3a8f5c"/>
<rect x="1280" y="929.9" width="17.6" height="80.9" fill="#f5a300"/>
</svg>
<div class="a" style="left:1358px;top:891px;width:187.5px;height:135px;background:#fff;border:1px solid #c3c8cb"></div>
<svg class="a" style="left:0;top:0" width="1920" height="1080">
<path d="M1405.8 975.6A46.5 46.5 0 0 1 1431.2 934.2L1436.2 944.0A35.5 35.5 0 0 0 1416.8 975.6Z" fill="#8fb34a"/>
<path d="M1431.2 934.2A46.5 46.5 0 0 1 1472.7 933.8L1467.9 943.7A35.5 35.5 0 0 0 1436.2 944.0Z" fill="#eeee6a"/>
<path d="M1472.7 933.8A46.5 46.5 0 0 1 1498.8 975.6L1487.8 975.6A35.5 35.5 0 0 0 1467.9 943.7Z" fill="#e2303a"/>
<path d="M1405.0 975.6A47.3 47.3 0 0 1 1499.6 975.6" stroke="#999" stroke-width="1" fill="none"/>
<path d="M1405.3 975.6L1402.3 975.6" stroke="#777" stroke-width="1"/>
<text x="1395.8" y="978.1" text-anchor="middle" font-family="Liberation Sans" font-size="6" fill="#aaa">0</text>
<path d="M1414.3 948.0L1411.8 946.2" stroke="#777" stroke-width="1"/>
<text x="1406.6" y="944.9" text-anchor="middle" font-family="Liberation Sans" font-size="6" fill="#aaa">20</text>
<path d="M1437.8 930.9L1436.8 928.0" stroke="#777" stroke-width="1"/>
<text x="1434.8" y="924.4" text-anchor="middle" font-family="Liberation Sans" font-size="6" fill="#aaa">40</text>
<path d="M1466.8 930.9L1467.8 928.0" stroke="#777" stroke-width="1"/>
<text x="1469.8" y="924.4" text-anchor="middle" font-family="Liberation Sans" font-size="6" fill="#aaa">60</text>
<path d="M1490.3 948.0L1492.8 946.2" stroke="#777" stroke-width="1"/>
<text x="1498.0" y="944.9" text-anchor="middle" font-family="Liberation Sans" font-size="6" fill="#aaa">80</text>
<path d="M1499.3 975.6L1502.3 975.6" stroke="#777" stroke-width="1"/>
<text x="1508.8" y="978.1" text-anchor="middle" font-family="Liberation Sans" font-size="6" fill="#aaa">100</text>
<path d="M1409.8 975.6H1449.8" stroke="#bbb" stroke-width="1.5"/>
<circle cx="1452.3" cy="975.6" r="2.5" fill="#fff" stroke="#888" stroke-width="1"/>
<path d="M1401.8 972.1L1406.8 975.6L1401.8 979.1Z" fill="#e2141f"/>
</svg>
<div class="t" style="left:1416.5px;top:992px;font-size:19px;font-weight:bold;color:#333;letter-spacing:1px">0 times</div>
<div class="a" style="left:1599px;top:200px;width:6px;height:851px;background:#dfe5e8"></div>
<div class="a" style="left:1605px;top:203px;width:287px;height:29px;background:#ebeff0;border-bottom:1.5px solid #f6f8f9"></div>
<div class="ph" style="left:1613px;top:211px">Data Table</div>
<svg class="a" style="left:1840.5px;top:211px" width="10" height="13"><path d="M2.5 1H7.5M3.5 1V7M6.5 1V7M1.5 7.5H8.5M5 7.5V12" stroke="#444" stroke-width="1.2" fill="none"/></svg>
<svg class="a" style="left:1871.5px;top:212px" width="10" height="10"><path d="M0.8 0.8L9.2 9.2M9.2 0.8L0.8 9.2" stroke="#444" stroke-width="1.3"/></svg>
<div class="a" style="left:1605px;top:231px;width:287px;height:818px;background:#fff;border:1px solid #b4c0c5;border-top:1.5px solid #b5bec2"></div>
<div class="a" style="left:1892px;top:200px;width:28px;height:851px;background:#d8dee1"></div>
<div class="t" style="left:1903px;top:216px;font-size:12.5px;color:#222;transform-origin:0 0;transform:translate(13px,0) rotate(90deg)">Parameter Settings</div>
<div class="a" style="left:1606px;top:232.9px;width:285px;height:26.299999999999983px;background:#e8ecee"></div>
<svg class="a" style="left:0;top:0" width="1920" height="1080"><path d="M1631.5 232.9V742.8 M1659.5 232.9V742.8 M1687.5 232.9V742.8 M1715.5 232.9V742.8 M1743.5 232.9V742.8 M1770.5 232.9V742.8 M1799.5 232.9V742.8 M1827.5 232.9V742.8 M1854.5 232.9V742.8 M1891.5 232.9V742.8 M1630.8 259.5H1890.8 M1630.8 281.5H1890.8 M1630.8 303.5H1890.8 M1630.8 325.5H1890.8 M1630.8 347.5H1890.8 M1630.8 369.5H1890.8 M1630.8 391.5H1890.8 M1630.8 413.5H1890.8 M1630.8 435.5H1890.8 M1630.8 457.5H1890.8 M1630.8 479.5H1890.8 M1630.8 501.5H1890.8 M1630.8 523.5H1890.8 M1630.8 545.5H1890.8 M1630.8 567.5H1890.8 M1630.8 589.5H1890.8 M1630.8 611.5H1890.8 M1630.8 633.5H1890.8 M1630.8 655.5H1890.8 M1630.8 677.5H1890.8 M1630.8 699.5H1890.8 M1630.8 721.5H1890.8 M1630.8 743.5H1890.8" stroke="#c6cdd1" stroke-width="1" fill="none"/><path d="M1606 259.5H1630.8" stroke="#c6cdd1" stroke-width="1"/></svg>
<div class="t" style="left:1636.8px;top:240.9px;font-size:12.5px;color:#333">y0</div>
<div class="t" style="left:1664.7px;top:240.9px;font-size:12.5px;color:#333">y1</div>
<div class="t" style="left:1692.6px;top:240.9px;font-size:12.5px;color:#333">y2</div>
<div class="t" style="left:1720.7px;top:240.9px;font-size:12.5px;color:#333">y3</div>
<div class="t" style="left:1748.6px;top:240.9px;font-size:12.5px;color:#333">y4</div>
<div class="t" style="left:1776.5px;top:240.9px;font-size:12.5px;color:#333">y5</div>
<div class="t" style="left:1804.7px;top:240.9px;font-size:12.5px;color:#333">y6</div>
<div class="t" style="left:1832.6px;top:240.9px;font-size:12.5px;color:#333">y7</div>
<div class="t" style="left:1860.5px;top:240.9px;font-size:12.5px;color:#333">y8</div>
<div class="t" style="left:1636.8px;top:265.2px;font-size:12.5px;color:#222">I...</div>
<div class="t" style="left:1664.7px;top:265.2px;font-size:12px;color:#333">...</div>
<div class="t" style="left:1692.6px;top:265.2px;font-size:12px;color:#333">...</div>
<div class="t" style="left:1720.7px;top:265.2px;font-size:12px;color:#333">...</div>
<div class="t" style="left:1748.6px;top:265.2px;font-size:12px;color:#333">...</div>
<div class="t" style="left:1776.5px;top:265.2px;font-size:12px;color:#333">...</div>
<div class="t" style="left:1804.7px;top:265.2px;font-size:12px;color:#333">...</div>
<div class="t" style="left:1832.6px;top:265.2px;font-size:12px;color:#333">...</div>
<div class="t" style="left:1860.5px;top:265.2px;font-size:12.5px;color:#222">83</div>
<div class="t" style="left:1636.8px;top:287.18px;font-size:12px;color:#333">...</div>
<div class="t" style="left:1664.7px;top:287.18px;font-size:12px;color:#333">...</div>
<div class="t" style="left:1692.6px;top:287.18px;font-size:12px;color:#333">...</div>
<div class="t" style="left:1720.7px;top:287.18px;font-size:12px;color:#333">...</div>
<div class="t" style="left:1748.6px;top:287.18px;font-size:12px;color:#333">...</div>
<div class="t" style="left:1776.5px;top:287.18px;font-size:12px;color:#333">...</div>
<div class="t" style="left:1804.7px;top:287.18px;font-size:12px;color:#333">...</div>
<div class="t" style="left:1832.6px;top:287.18px;font-size:12px;color:#333">...</div>
<div class="t" style="left:1860.5px;top:287.18px;font-size:12.5px;color:#222">12</div>
<div class="t" style="left:1636.8px;top:309.15999999999997px;font-size:12px;color:#333">...</div>
<div class="t" style="left:1664.7px;top:309.15999999999997px;font-size:12px;color:#333">...</div>
<div class="t" style="left:1692.6px;top:309.15999999999997px;font-size:12px;color:#333">...</div>
<div class="t" style="left:1720.7px;top:309.15999999999997px;font-size:12px;color:#333">...</div>
<div class="t" style="left:1748.6px;top:309.15999999999997px;font-size:12px;color:#333">...</div>
<div class="t" style="left:1776.5px;top:309.15999999999997px;font-size:12px;color:#333">...</div>
<div class="t" style="left:1804.7px;top:309.15999999999997px;font-size:12px;color:#333">...</div>
<div class="t" style="left:1832.6px;top:309.15999999999997px;font-size:12px;color:#333">...</div>
<div class="t" style="left:1860.5px;top:309.15999999999997px;font-size:12.5px;color:#222">13</div>
<div class="t" style="left:1636.8px;top:331.14px;font-size:12px;color:#333">...</div>
<div class="t" style="left:1664.7px;top:331.14px;font-size:12px;color:#333">...</div>
<div class="t" style="left:1692.6px;top:331.14px;font-size:12px;color:#333">...</div>
<div class="t" style="left:1720.7px;top:331.14px;font-size:12px;color:#333">...</div>
<div class="t" style="left:1748.6px;top:331.14px;font-size:12px;color:#333">...</div>
<div class="t" style="left:1776.5px;top:331.14px;font-size:12.5px;color:#222">83</div>
<div class="t" style="left:1804.7px;top:331.14px;font-size:12px;color:#333">...</div>
<div class="t" style="left:1832.6px;top:331.14px;font-size:12px;color:#333">...</div>
<div class="t" style="left:1860.5px;top:331.14px;font-size:12.5px;color:#222">13</div>
<div class="t" style="left:1636.8px;top:353.12px;font-size:12px;color:#333">...</div>
<div class="t" style="left:1664.7px;top:353.12px;font-size:12px;color:#333">...</div>
<div class="t" style="left:1692.6px;top:353.12px;font-size:12px;color:#333">...</div>
<div class="t" style="left:1720.7px;top:353.12px;font-size:12px;color:#333">...</div>
<div class="t" style="left:1748.6px;top:353.12px;font-size:12px;color:#333">...</div>
<div class="t" style="left:1776.5px;top:353.12px;font-size:12px;color:#333">...</div>
<div class="t" style="left:1804.7px;top:353.12px;font-size:12px;color:#333">...</div>
<div class="t" style="left:1832.6px;top:353.12px;font-size:12px;color:#333">...</div>
<div class="t" style="left:1860.5px;top:353.12px;font-size:12.5px;color:#222">26</div>
<div class="t" style="left:1636.8px;top:375.1px;font-size:12px;color:#333">...</div>
<div class="t" style="left:1664.7px;top:375.1px;font-size:12px;color:#333">...</div>
<div class="t" style="left:1692.6px;top:375.1px;font-size:12px;color:#333">...</div>
<div class="t" style="left:1720.7px;top:375.1px;font-size:12px;color:#333">...</div>
<div class="t" style="left:1748.6px;top:375.1px;font-size:12px;color:#333">...</div>
<div class="t" style="left:1776.5px;top:375.1px;font-size:12px;color:#333">...</div>
<div class="t" style="left:1804.7px;top:375.1px;font-size:12px;color:#333">...</div>
<div class="t" style="left:1832.6px;top:375.1px;font-size:12px;color:#333">...</div>
<div class="t" style="left:1860.5px;top:375.1px;font-size:12.5px;color:#222">13</div>
<div class="t" style="left:1636.8px;top:397.08px;font-size:12px;color:#333">...</div>
<div class="t" style="left:1664.7px;top:397.08px;font-size:12px;color:#333">...</div>
<div class="t" style="left:1692.6px;top:397.08px;font-size:12px;color:#333">...</div>
<div class="t" style="left:1720.7px;top:397.08px;font-size:12px;color:#333">...</div>
<div class="t" style="left:1748.6px;top:397.08px;font-size:12px;color:#333">...</div>
<div class="t" style="left:1776.5px;top:397.08px;font-size:12px;color:#333">...</div>
<div class="t" style="left:1804.7px;top:397.08px;font-size:12px;color:#333">...</div>
<div class="t" style="left:1832.6px;top:397.08px;font-size:12px;color:#333">...</div>
<div class="t" style="left:1860.5px;top:397.08px;font-size:12.5px;color:#222">13</div>
<div class="t" style="left:1636.8px;top:419.06px;font-size:12px;color:#333">...</div>
<div class="t" style="left:1664.7px;top:419.06px;font-size:12px;color:#333">...</div>
<div class="t" style="left:1692.6px;top:419.06px;font-size:12px;color:#333">...</div>
<div class="t" style="left:1720.7px;top:419.06px;font-size:12px;color:#333">...</div>
<div class="t" style="left:1748.6px;top:419.06px;font-size:12px;color:#333">...</div>
<div class="t" style="left:1776.5px;top:419.06px;font-size:12px;color:#333">...</div>
<div class="t" style="left:1804.7px;top:419.06px;font-size:12px;color:#333">...</div>
<div class="t" style="left:1832.6px;top:419.06px;font-size:12px;color:#333">...</div>
<div class="t" style="left:1860.5px;top:419.06px;font-size:12.5px;color:#222">41</div>
<div class="t" style="left:1636.8px;top:441.03999999999996px;font-size:12.5px;color:#222">L...</div>
<div class="t" style="left:1664.7px;top:441.03999999999996px;font-size:12px;color:#333">...</div>
<div class="t" style="left:1692.6px;top:441.03999999999996px;font-size:12px;color:#333">...</div>
<div class="t" style="left:1720.7px;top:441.03999999999996px;font-size:12px;color:#333">...</div>
<div class="t" style="left:1748.6px;top:441.03999999999996px;font-size:12px;color:#333">...</div>
<div class="t" style="left:1776.5px;top:441.03999999999996px;font-size:12px;color:#333">...</div>
<div class="t" style="left:1804.7px;top:441.03999999999996px;font-size:12px;color:#333">...</div>
<div class="t" style="left:1832.6px;top:441.03999999999996px;font-size:12px;color:#333">...</div>
<div class="t" style="left:1860.5px;top:441.03999999999996px;font-size:12.5px;color:#222">15</div>
<div class="t" style="left:1636.8px;top:463.02px;font-size:12px;color:#333">...</div>
<div class="t" style="left:1664.7px;top:463.02px;font-size:12px;color:#333">...</div>
<div class="t" style="left:1692.6px;top:463.02px;font-size:12px;color:#333">...</div>
<div class="t" style="left:1720.7px;top:463.02px;font-size:12px;color:#333">...</div>
<div class="t" style="left:1748.6px;top:463.02px;font-size:12px;color:#333">...</div>
<div class="t" style="left:1776.5px;top:463.02px;font-size:12px;color:#333">...</div>
<div class="t" style="left:1804.7px;top:463.02px;font-size:12px;color:#333">...</div>
<div class="t" style="left:1832.6px;top:463.02px;font-size:12px;color:#333">...</div>
<div class="t" style="left:1860.5px;top:463.02px;font-size:12.5px;color:#222">15</div>
<div class="t" style="left:1636.8px;top:485.0px;font-size:12.5px;color:#222">F...</div>
<div class="t" style="left:1664.7px;top:485.0px;font-size:12px;color:#333">...</div>
<div class="t" style="left:1692.6px;top:485.0px;font-size:12px;color:#333">...</div>
<div class="t" style="left:1720.7px;top:485.0px;font-size:12px;color:#333">...</div>
<div class="t" style="left:1748.6px;top:485.0px;font-size:12px;color:#333">...</div>
<div class="t" style="left:1776.5px;top:485.0px;font-size:12px;color:#333">...</div>
<div class="t" style="left:1804.7px;top:485.0px;font-size:12px;color:#333">...</div>
<div class="t" style="left:1832.6px;top:485.0px;font-size:12px;color:#333">...</div>
<div class="t" style="left:1860.5px;top:485.0px;font-size:12.5px;color:#222">18</div>
<div class="t" style="left:1636.8px;top:506.98px;font-size:12px;color:#333">...</div>
<div class="t" style="left:1664.7px;top:506.98px;font-size:12px;color:#333">...</div>
<div class="t" style="left:1692.6px;top:506.98px;font-size:12px;color:#333">...</div>
<div class="t" style="left:1720.7px;top:506.98px;font-size:12px;color:#333">...</div>
<div class="t" style="left:1748.6px;top:506.98px;font-size:12px;color:#333">...</div>
<div class="t" style="left:1776.5px;top:506.98px;font-size:12px;color:#333">...</div>
<div class="t" style="left:1804.7px;top:506.98px;font-size:12px;color:#333">...</div>
<div class="t" style="left:1832.6px;top:506.98px;font-size:12px;color:#333">...</div>
<div class="t" style="left:1860.5px;top:506.98px;font-size:12.5px;color:#222">14</div>
<div class="t" style="left:1636.8px;top:528.96px;font-size:12px;color:#333">...</div>
<div class="t" style="left:1664.7px;top:528.96px;font-size:12px;color:#333">...</div>
<div class="t" style="left:1692.6px;top:528.96px;font-size:12px;color:#333">...</div>
<div class="t" style="left:1720.7px;top:528.96px;font-size:12px;color:#333">...</div>
<div class="t" style="left:1748.6px;top:528.96px;font-size:12px;color:#333">...</div>
<div class="t" style="left:1776.5px;top:528.96px;font-size:12px;color:#333">...</div>
<div class="t" style="left:1804.7px;top:528.96px;font-size:12px;color:#333">...</div>
<div class="t" style="left:1832.6px;top:528.96px;font-size:12px;color:#333">...</div>
<div class="t" style="left:1860.5px;top:528.96px;font-size:12.5px;color:#222">22</div>
<div class="t" style="left:1636.8px;top:550.94px;font-size:12px;color:#333">...</div>
<div class="t" style="left:1664.7px;top:550.94px;font-size:12px;color:#333">...</div>
<div class="t" style="left:1692.6px;top:550.94px;font-size:12px;color:#333">...</div>
<div class="t" style="left:1720.7px;top:550.94px;font-size:12px;color:#333">...</div>
<div class="t" style="left:1748.6px;top:550.94px;font-size:12px;color:#333">...</div>
<div class="t" style="left:1776.5px;top:550.94px;font-size:12px;color:#333">...</div>
<div class="t" style="left:1804.7px;top:550.94px;font-size:12px;color:#333">...</div>
<div class="t" style="left:1832.6px;top:550.94px;font-size:12px;color:#333">...</div>
<div class="t" style="left:1860.5px;top:550.94px;font-size:12.5px;color:#222">10</div>
<div class="t" style="left:1636.8px;top:572.9200000000001px;font-size:12px;color:#333">...</div>
<div class="t" style="left:1664.7px;top:572.9200000000001px;font-size:12px;color:#333">...</div>
<div class="t" style="left:1692.6px;top:572.9200000000001px;font-size:12px;color:#333">...</div>
<div class="t" style="left:1720.7px;top:572.9200000000001px;font-size:12px;color:#333">...</div>
<div class="t" style="left:1748.6px;top:572.9200000000001px;font-size:12px;color:#333">...</div>
<div class="t" style="left:1776.5px;top:572.9200000000001px;font-size:12px;color:#333">...</div>
<div class="t" style="left:1804.7px;top:572.9200000000001px;font-size:12px;color:#333">...</div>
<div class="t" style="left:1832.6px;top:572.9200000000001px;font-size:12px;color:#333">...</div>
<div class="t" style="left:1860.5px;top:572.9200000000001px;font-size:12.5px;color:#222">17</div>
<div class="t" style="left:1636.8px;top:594.9px;font-size:12px;color:#333">...</div>
<div class="t" style="left:1664.7px;top:594.9px;font-size:12px;color:#333">...</div>
<div class="t" style="left:1692.6px;top:594.9px;font-size:12px;color:#333">...</div>
<div class="t" style="left:1720.7px;top:594.9px;font-size:12px;color:#333">...</div>
<div class="t" style="left:1748.6px;top:594.9px;font-size:12px;color:#333">...</div>
<div class="t" style="left:1776.5px;top:594.9px;font-size:12px;color:#333">...</div>
<div class="t" style="left:1804.7px;top:594.9px;font-size:12px;color:#333">...</div>
<div class="t" style="left:1832.6px;top:594.9px;font-size:12px;color:#333">...</div>
<div class="t" style="left:1860.5px;top:594.9px;font-size:12.5px;color:#222">28</div>
<div class="t" style="left:1636.8px;top:616.88px;font-size:12.5px;color:#222">L...</div>
<div class="t" style="left:1664.7px;top:616.88px;font-size:12px;color:#333">...</div>
<div class="t" style="left:1692.6px;top:616.88px;font-size:12px;color:#333">...</div>
<div class="t" style="left:1720.7px;top:616.88px;font-size:12px;color:#333">...</div>
<div class="t" style="left:1748.6px;top:616.88px;font-size:12px;color:#333">...</div>
<div class="t" style="left:1776.5px;top:616.88px;font-size:12.5px;color:#222">67</div>
<div class="t" style="left:1804.7px;top:616.88px;font-size:12px;color:#333">...</div>
<div class="t" style="left:1832.6px;top:616.88px;font-size:12px;color:#333">...</div>
<div class="t" style="left:1860.5px;top:616.88px;font-size:12.5px;color:#222">12</div>
<div class="t" style="left:1636.8px;top:638.86px;font-size:12px;color:#333">...</div>
<div class="t" style="left:1664.7px;top:638.86px;font-size:12px;color:#333">...</div>
<div class="t" style="left:1692.6px;top:638.86px;font-size:12px;color:#333">...</div>
<div class="t" style="left:1720.7px;top:638.86px;font-size:12px;color:#333">...</div>
<div class="t" style="left:1748.6px;top:638.86px;font-size:12px;color:#333">...</div>
<div class="t" style="left:1776.5px;top:638.86px;font-size:12px;color:#333">...</div>
<div class="t" style="left:1804.7px;top:638.86px;font-size:12px;color:#333">...</div>
<div class="t" style="left:1832.6px;top:638.86px;font-size:12px;color:#333">...</div>
<div class="t" style="left:1860.5px;top:638.86px;font-size:12.5px;color:#222">36</div>
<div class="t" style="left:1636.8px;top:660.8399999999999px;font-size:12px;color:#333">...</div>
<div class="t" style="left:1664.7px;top:660.8399999999999px;font-size:12px;color:#333">...</div>
<div class="t" style="left:1692.6px;top:660.8399999999999px;font-size:12px;color:#333">...</div>
<div class="t" style="left:1720.7px;top:660.8399999999999px;font-size:12px;color:#333">...</div>
<div class="t" style="left:1748.6px;top:660.8399999999999px;font-size:12px;color:#333">...</div>
<div class="t" style="left:1776.5px;top:660.8399999999999px;font-size:12px;color:#333">...</div>
<div class="t" style="left:1804.7px;top:660.8399999999999px;font-size:12px;color:#333">...</div>
<div class="t" style="left:1832.6px;top:660.8399999999999px;font-size:12px;color:#333">...</div>
<div class="t" style="left:1860.5px;top:660.8399999999999px;font-size:12.5px;color:#222">12</div>
<div class="t" style="left:1636.8px;top:682.8199999999999px;font-size:12.5px;color:#222">L...</div>
<div class="t" style="left:1664.7px;top:682.8199999999999px;font-size:12px;color:#333">...</div>
<div class="t" style="left:1692.6px;top:682.8199999999999px;font-size:12px;color:#333">...</div>
<div class="t" style="left:1720.7px;top:682.8199999999999px;font-size:12px;color:#333">...</div>
<div class="t" style="left:1748.6px;top:682.8199999999999px;font-size:12px;color:#333">...</div>
<div class="t" style="left:1776.5px;top:682.8199999999999px;font-size:12px;color:#333">...</div>
<div class="t" style="left:1804.7px;top:682.8199999999999px;font-size:12px;color:#333">...</div>
<div class="t" style="left:1832.6px;top:682.8199999999999px;font-size:12px;color:#333">...</div>
<div class="t" style="left:1860.5px;top:682.8199999999999px;font-size:12.5px;color:#222">16</div>
<div class="t" style="left:1636.8px;top:704.8px;font-size:12px;color:#333">...</div>
<div class="t" style="left:1664.7px;top:704.8px;font-size:12px;color:#333">...</div>
<div class="t" style="left:1692.6px;top:704.8px;font-size:12px;color:#333">...</div>
<div class="t" style="left:1720.7px;top:704.8px;font-size:12px;color:#333">...</div>
<div class="t" style="left:1748.6px;top:704.8px;font-size:12px;color:#333">...</div>
<div class="t" style="left:1776.5px;top:704.8px;font-size:12px;color:#333">...</div>
<div class="t" style="left:1804.7px;top:704.8px;font-size:12px;color:#333">...</div>
<div class="t" style="left:1832.6px;top:704.8px;font-size:12px;color:#333">...</div>
<div class="t" style="left:1860.5px;top:704.8px;font-size:12.5px;color:#222">22</div>
<div class="t" style="left:1636.8px;top:726.78px;font-size:12px;color:#333">...</div>
<div class="t" style="left:1664.7px;top:726.78px;font-size:12px;color:#333">...</div>
<div class="t" style="left:1692.6px;top:726.78px;font-size:12.5px;color:#222">31</div>
<div class="t" style="left:1720.7px;top:726.78px;font-size:12.5px;color:#222">85</div>
<div class="t" style="left:1748.6px;top:726.78px;font-size:12px;color:#333">...</div>
<div class="t" style="left:1776.5px;top:726.78px;font-size:12.5px;color:#222">9</div>
<div class="t" style="left:1804.7px;top:726.78px;font-size:12.5px;color:#222">27</div>
<div class="t" style="left:1832.6px;top:726.78px;font-size:12.5px;color:#222">79</div>
<div class="t" style="left:1860.5px;top:726.78px;font-size:12.5px;color:#222">0</div>
<svg class="a" style="left:1611px;top:266px" width="13" height="10"><path d="M1 5H11M7 1.5L11 5L7 8.5" stroke="#4a5a6a" stroke-width="1.2" fill="none"/></svg>
<div class="a" style="left:0;top:1049px;width:1920px;height:2px;background:#bfc7cb"></div>
<div class="a" style="left:0;top:1051px;width:1920px;height:1px;background:#f4f6f7"></div>
<div class="a" style="left:0;top:1052px;width:1920px;height:28px;background:#34495e;border-top:1px solid #1c2b3a"></div>
<div class="t" style="left:7px;top:1060.5px;font-size:11.9px;color:#fff">C:&#8361;Users&#8361;Administrator&#8361;Documents&#8361;Malmijal&#8361;Samples&#8361;stackedbar.dat</div>
<div class="t" style="left:1665px;top:1060px;font-size:12.5px;color:#fff">No. of Samples: 22</div>
<svg class="a" style="left:1782px;top:1058px" width="18" height="14"><path d="M0.5 11L2.5 7L4 12L6 5L8 11L10 3L12 9L14 2L15.5 7L17.5 4" stroke="#dfe6ec" stroke-width="1" fill="none"/></svg>
<div class="a" style="left:1803.5px;top:1055.5px;width:95.5px;height:21px;background:#e9edee;border:1px solid #c9d0d4"></div>
<svg class="a" style="left:1886px;top:1064px" width="8" height="5"><path d="M0.5 0.5H7.5L4 4.5Z" fill="#b0b6ba"/></svg>
</body></html>
